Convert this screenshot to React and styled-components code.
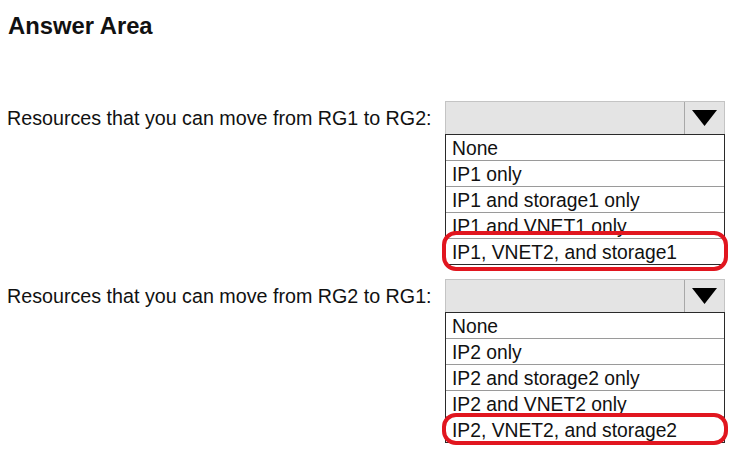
import React from 'react';
import styled, { createGlobalStyle } from 'styled-components';

const Global = createGlobalStyle`
  html, body {
    margin: 0;
    padding: 0;
    background: #fff;
  }
  body {
    font-family: "Liberation Sans", Arial, sans-serif;
    color: #111;
  }
`;

const Page = styled.div`
  width: 748px;
  height: 465px;
  padding: 12px 0 0 7px;
  box-sizing: border-box;
  overflow: hidden;
`;

const Title = styled.h1`
  margin: 0 0 61px 1px;
  font-size: 23.8px;
  line-height: 28px;
  font-weight: bold;
  color: #111;
`;

const Question = styled.div`
  display: grid;
  grid-template-columns: 438px 280px;
  margin-bottom: ${p => p.$gap || 0}px;
`;

const Label = styled.div`
  font-size: 19.7px;
  line-height: 24px;
  padding-top: 5px;
  color: #111;
`;

const Select = styled.div`
  display: flex;
  flex-direction: column;
`;

const Header = styled.div`
  height: 33px;
  box-sizing: border-box;
  display: flex;
  background: #e4e4e4;
  border: 1px solid #c4c4c4;
  border-bottom: none;
`;

const Field = styled.div`
  flex: 1;
`;

const ArrowCell = styled.div`
  width: 39px;
  border-left: 1px solid #a8a8a8;
  display: flex;
  align-items: center;
  justify-content: center;
`;

const List = styled.ul`
  list-style: none;
  margin: 0;
  padding: 0;
  border: 1px solid #2a2a2a;
`;

const Option = styled.li`
  position: relative;
  height: 26px;
  box-sizing: border-box;
  padding: 3px 0 0 6px;
  font-size: 19.3px;
  line-height: 22px;
  white-space: nowrap;
  color: #111;
  border-bottom: 1px solid #9a9a9a;
  &:last-child {
    border-bottom: none;
    height: 25px;
  }
`;

const Ring = styled.span`
  position: absolute;
  left: -4px;
  right: -4px;
  top: ${p => p.$top}px;
  bottom: ${p => p.$bottom}px;
  border: 4px solid #e1161f;
  border-radius: 14px;
  pointer-events: none;
`;

const Arrow = () => (
  <svg width="25" height="16" viewBox="0 0 25 16">
    <polygon points="0,0 25,0 12.5,16" fill="#000" />
  </svg>
);

const questions = [
  {
    label: 'Resources that you can move from RG1 to RG2:',
    options: ['None', 'IP1 only', 'IP1 and storage1 only', 'IP1 and VNET1 only', 'IP1, VNET2, and storage1'],
    ring: { top: -8, bottom: -7 },
  },
  {
    label: 'Resources that you can move from RG2 to RG1:',
    options: ['None', 'IP2 only', 'IP2 and storage2 only', 'IP2 and VNET2 only', 'IP2, VNET2, and storage2'],
    ring: { top: -4, bottom: -3 },
  },
];

export default function App() {
  return (
    <Page>
      <Global />
      <Title>Answer Area</Title>
      {questions.map((q, i) => (
        <Question key={i} $gap={i === 0 ? 14 : 0}>
          <Label>{q.label}</Label>
          <Select>
            <Header>
              <Field />
              <ArrowCell>
                <Arrow />
              </ArrowCell>
            </Header>
            <List>
              {q.options.map((o, j) => (
                <Option key={j}>
                  {o}
                  {j === q.options.length - 1 && <Ring $top={q.ring.top} $bottom={q.ring.bottom} />}
                </Option>
              ))}
            </List>
          </Select>
        </Question>
      ))}
    </Page>
  );
}
